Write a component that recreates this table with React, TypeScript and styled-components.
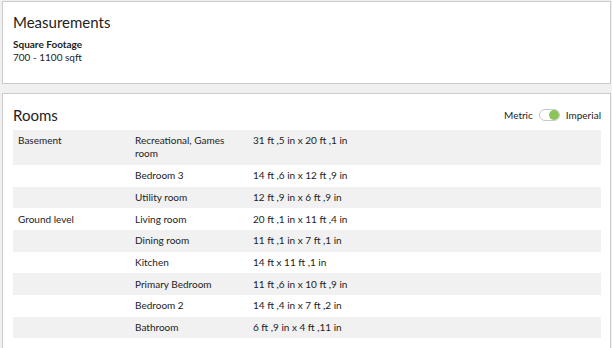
import React, { useState } from 'react';
import styled, { createGlobalStyle } from 'styled-components';

const GlobalStyle = createGlobalStyle`
  html, body {
    margin: 0;
    padding: 0;
    background: #f0f0f0;
  }
  body {
    font-family: Lato, "Open Sans", "Liberation Sans", sans-serif;
    color: #222;
  }
`;

const Page = styled.div`
  display: flex;
  flex-direction: column;
  gap: 9px;
  padding: 1px 1px 0 2px;
`;

const Card = styled.section`
  background: #fff;
  border: 1px solid #cbcbcb;
  padding: 8px 9px 12px 10px;
`;

const Heading = styled.h2`
  margin: 0;
  font-size: 15px;
  font-weight: 400;
  line-height: 24px;
  color: #222;
`;

const HeaderRow = styled.div`
  display: flex;
  align-items: center;
  justify-content: space-between;
  margin-top: 1px;
  margin-bottom: 3px;
`;

const Label = styled.div`
  font-size: 10px;
  font-weight: 700;
  line-height: 13px;
  margin-top: 4px;
`;

const Value = styled.div`
  font-size: 10px;
  line-height: 13px;
  margin-bottom: 7px;
`;

const UnitSwitch = styled.div`
  display: flex;
  align-items: center;
  gap: 6px;
  font-size: 10px;
`;

const Track = styled.button<{ $on: boolean }>`
  position: relative;
  width: 21px;
  height: 12px;
  padding: 0;
  border: 1px solid #c8c8c8;
  border-radius: 6px;
  background: #fff;
  cursor: pointer;
`;

const Knob = styled.span<{ $on: boolean }>`
  position: absolute;
  top: 0px;
  left: ${p => (p.$on ? '9px' : '0px')};
  width: 10px;
  height: 10px;
  border-radius: 50%;
  background: ${p => (p.$on ? '#8bc559' : '#bbb')};
`;

const Table = styled.div`
  display: flex;
  flex-direction: column;
`;

const Row = styled.div<{ $striped: boolean }>`
  display: grid;
  grid-template-columns: 117px 118px 1fr;
  background: ${p => (p.$striped ? '#f1f1f1' : '#fff')};
  font-size: 10px;
  line-height: 13.3px;
`;

const Cell = styled.div`
  padding: 4.2px 5px;
`;

const rooms = [
  ['Basement', 'Recreational, Games room', '31 ft ,5 in x 20 ft ,1 in'],
  ['', 'Bedroom 3', '14 ft ,6 in x 12 ft ,9 in'],
  ['', 'Utility room', '12 ft ,9 in x 6 ft ,9 in'],
  ['Ground level', 'Living room', '20 ft ,1 in x 11 ft ,4 in'],
  ['', 'Dining room', '11 ft ,1 in x 7 ft ,1 in'],
  ['', 'Kitchen', '14 ft x 11 ft ,1 in'],
  ['', 'Primary Bedroom', '11 ft ,6 in x 10 ft ,9 in'],
  ['', 'Bedroom 2', '14 ft ,4 in x 7 ft ,2 in'],
  ['', 'Bathroom', '6 ft ,9 in x 4 ft ,11 in'],
];

const App = () => {
  const [imperial, setImperial] = useState(true);

  return (
    <Page>
      <GlobalStyle />
      <Card>
        <Heading>Measurements</Heading>
        <Label>Square Footage</Label>
        <Value>700 - 1100 sqft</Value>
      </Card>
      <Card>
        <HeaderRow>
          <Heading>Rooms</Heading>
          <UnitSwitch>
            <span>Metric</span>
            <Track $on={imperial} onClick={() => setImperial(!imperial)}>
              <Knob $on={imperial} />
            </Track>
            <span>Imperial</span>
          </UnitSwitch>
        </HeaderRow>
        <Table>
          {rooms.map((r, i) => (
            <Row key={i} $striped={i % 2 === 0}>
              <Cell>{r[0]}</Cell>
              <Cell>{r[1]}</Cell>
              <Cell>{r[2]}</Cell>
            </Row>
          ))}
        </Table>
      </Card>
    </Page>
  );
};

export default App;
